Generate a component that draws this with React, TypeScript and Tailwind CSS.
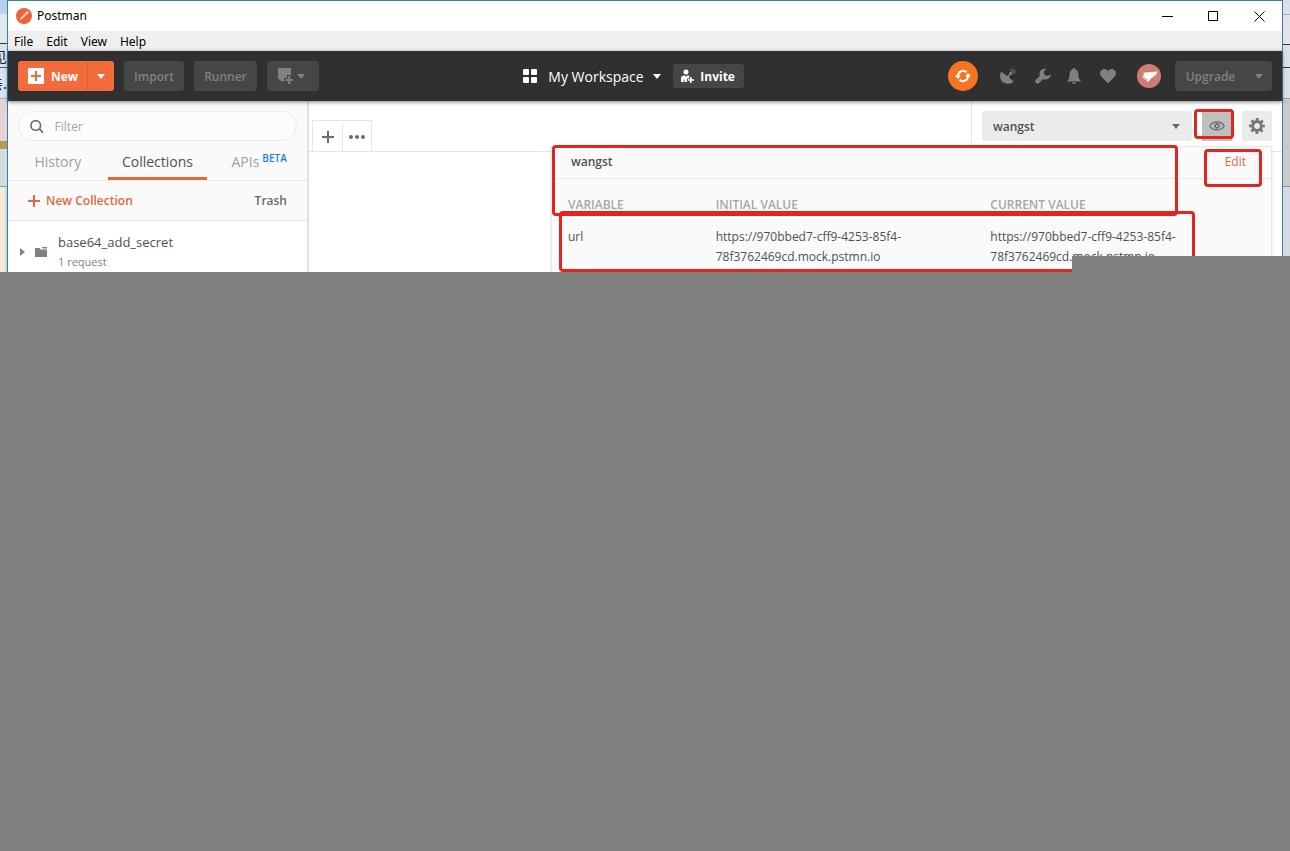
import React from 'react';
import { FaHeart } from 'react-icons/fa';

interface Variable {
  name: string;
  initial: string;
  current: string;
}

interface IconProps {
  className?: string;
}

const mockUrl = 'https://970bbed7-cff9-4253-85f4-78f3762469cd.mock.pstmn.io';

const variables: Variable[] = [{ name: 'url', initial: mockUrl, current: mockUrl }];

const menuItems = ['File', 'Edit', 'View', 'Help'];

const Caret: React.FC<IconProps> = ({ className }) => (
  <svg viewBox="0 0 8 5" className={`h-[5px] w-2 ${className ?? ''}`} fill="currentColor">
    <path d="M0 0h8L4 5z" />
  </svg>
);

const PostmanLogo = () => (
  <svg viewBox="0 0 16 16" className="h-4 w-4">
    <circle cx="8" cy="8" r="8" fill="#ee6237" />
    <path d="M4 11.8l1-2.6 4.8-4.6 1.6 1.4-4.8 4.4z" fill="#f9b79f" />
    <path d="M4 12l6.2-6.6" stroke="#fff" strokeWidth="0.7" />
    <circle cx="11.2" cy="4.4" r="1.5" fill="#fbd0c0" />
  </svg>
);

const SatelliteIcon = () => (
  <svg viewBox="0 0 16 16" className="h-4 w-4" fill="currentColor">
    <path d="M1.2 3.800C-.6 7.400-.2 11 2.200 13.600c2.800 2.800 7.800 2.800 11.600.200L8.800 9.200l1.800-2-1.200-1.200-2 1.900z" />
    <circle cx="10.700" cy="5.400" r="1.700" />
    <path d="M10 2c2.400.100 4 1.600 4.100 4.200" fill="none" stroke="currentColor" strokeWidth="1.400" opacity="0.700" />
    <path d="M11.500.500c2.500.200 4 1.800 4.200 4.300" fill="none" stroke="currentColor" opacity="0.500" />
  </svg>
);

const WrenchIcon = () => (
  <svg viewBox="0 0 16 16" className="h-4 w-4" fill="currentColor">
    <path d="M11.300 1C8 .200 4.800 2 4.500 5.400c-.100 1 .100 1.900.400 2.700L.900 11.600c-1.200 1.100-1 2.700 0 3.500 1 .900 2.600.800 3.500-.300l3.300-3.600c3.600 1.200 7.700-.400 8.300-5l-3.200 1.900-3.200-1.100-.900-3.300z" />
  </svg>
);

const BellIcon = () => (
  <svg viewBox="0 0 14 16" className="h-4 w-[14px]" fill="currentColor">
    <path d="M7 0c.9 0 1.300.600 1.400 1.300 2 .800 2.900 2.700 3 5.200.100 2.800.500 4.600 2.200 6.300v.700H.400v-.700c1.700-1.700 2.100-3.500 2.200-6.300.100-2.500 1-4.400 3-5.200C5.700.600 6.100 0 7 0z" />
    <path d="M5 14.200h4c-.200 1-1 1.600-2 1.600s-1.800-.600-2-1.600z" />
  </svg>
);

const SyncIcon = () => (
  <svg viewBox="0 0 18 18" className="h-[18px] w-[18px]" fill="none" stroke="#fff" strokeWidth="2">
    <path d="M4 9.500A5.200 5.200 0 0 1 12.600 5.200" />
    <path d="M14 8.500A5.200 5.200 0 0 1 5.400 12.800" />
    <path d="M.800 8.600h6L3.900 12z" fill="#fff" stroke="none" />
    <path d="M11.200 9.400h6L14.100 6z" fill="#fff" stroke="none" />
  </svg>
);

const TitleBar = () => (
  <div className="flex h-[30px] items-center bg-white pl-2 font-['Noto_Sans'] text-xs text-black">
    <PostmanLogo />
    <span className="ml-[5px]">Postman</span>
    <div className="ml-auto flex h-full">
      <button aria-label="Minimize" className="flex w-[46px] items-center justify-center">
        <svg viewBox="0 0 11 11" className="h-[11px] w-[11px]" stroke="#000"><path d="M0 5.500h11" /></svg>
      </button>
      <button aria-label="Maximize" className="flex w-[46px] items-center justify-center">
        <svg viewBox="0 0 11 11" className="h-[11px] w-[11px]" stroke="#000" fill="none"><path d="M.500.500h9v9h-9z" /></svg>
      </button>
      <button aria-label="Close" className="flex w-[46px] items-center justify-center">
        <svg viewBox="0 0 11 11" className="h-[11px] w-[11px]" stroke="#000"><path d="M.500.500l10 10M10.500.500l-10 10" /></svg>
      </button>
    </div>
  </div>
);

const Toolbar = () => (
  <header className="relative z-10 flex h-[50px] items-center justify-between bg-[#303030] px-[10px] text-xs font-semibold text-[#808080] shadow-[0_1px_4px_rgba(0,0,0,0.5)]">
    <div className="flex gap-[10px]">
      <div className="flex h-[30px] overflow-hidden rounded-[3px] bg-[#f26b3a] text-white">
        <button className="flex w-[70px] items-center gap-[7px] border-r border-[#e2602f] pl-[10px] font-bold">
          <svg viewBox="0 0 16 16" className="h-4 w-4">
            <rect width="16" height="16" rx="1" fill="#fff" />
            <path d="M8 3v10M3 8h10" stroke="#f26b3a" strokeWidth="2" />
          </svg>
          <span className="pt-[2px]">New</span>
        </button>
        <button aria-label="More new options" className="flex w-[26px] items-center justify-center">
          <Caret />
        </button>
      </div>
      <button className="h-[30px] w-[60px] rounded-[3px] bg-[#464646] pt-[2px]">Import</button>
      <button className="h-[30px] w-[63px] rounded-[3px] bg-[#464646] pt-[2px]">Runner</button>
      <button aria-label="New window" className="flex h-[30px] w-[52px] items-center justify-center gap-[3px] rounded-[3px] bg-[#464646] pr-1">
        <svg viewBox="0 0 17 16" className="h-4 w-[17px]" fill="currentColor">
          <path d="M1 0h13v7h-4v3H7v3.500H4.500L1 10.500z" />
          <path d="M11.200 8h2v3H16v2h-2.800v3h-2v-3H8.400v-2h2.800z" />
        </svg>
        <Caret />
      </button>
    </div>

    <div className="flex items-center text-white">
      <svg viewBox="0 0 14 14" className="h-[14px] w-[14px]" fill="#fff">
        <rect width="6" height="6" rx="1" />
        <rect x="8" width="6" height="6" rx="1" />
        <rect y="8" width="6" height="6" rx="1" />
        <rect x="8" y="8" width="6" height="6" rx="1" />
      </svg>
      <button className="ml-[11px] flex items-center gap-[9px] text-sm font-medium">
        <span className="pt-[2px]">My Workspace</span>
        <Caret />
      </button>
      <button className="ml-3 flex h-6 w-[71px] items-center justify-center gap-[6px] rounded-[3px] bg-[#464646] font-bold">
        <svg viewBox="0 0 13 14" className="h-[14px] w-[13px]" fill="#fff">
          <circle cx="5" cy="3" r="2.500" />
          <path d="M0 13V9.500C0 7.500 1.500 6.500 3 6.500h1l1 1.500 1-1.500h1c1 0 1.700.400 2 1H8v2H6V13H3.500v-2.500h-.800V13z" />
          <path d="M9 8h1.600v2.200H13v1.600h-2.400V14H9v-2.200H6.800v-1.600H9z" />
        </svg>
        <span className="pt-[2px]">Invite</span>
      </button>
    </div>

    <div className="flex items-center">
      <button aria-label="Sync" className="flex h-[30px] w-[30px] items-center justify-center rounded-full bg-[#f57421]">
        <SyncIcon />
      </button>
      <div className="ml-[22px] flex items-center">
        <button aria-label="Capture requests"><SatelliteIcon /></button>
        <button aria-label="Settings" className="ml-[19px]"><WrenchIcon /></button>
        <button aria-label="Notifications" className="ml-4"><BellIcon /></button>
        <button aria-label="Favorites" className="ml-[19px]"><FaHeart className="h-4 w-4" /></button>
      </div>
      <button aria-label="Account" className="ml-[21px] h-6 w-6 overflow-hidden rounded-full bg-[#cf7d73]">
        <svg viewBox="0 0 24 24" fill="#fff">
          <path d="M6 8.800l14.500-1.300-1.500 3.300-4.500 3.200-3.500 4-1.500-.500 1-2.700-3.500 1.200 1.800-2.200-3.800.400 2.800-2-2.800.200 2.200-1.800z" />
        </svg>
      </button>
      <div className="ml-[14px] flex h-[30px] rounded-[3px] bg-[#464646]">
        <button className="w-[71px] pt-[2px]">Upgrade</button>
        <button aria-label="Upgrade options" className="flex w-[26px] items-center justify-center"><Caret /></button>
      </div>
    </div>
  </header>
);

const Sidebar = () => (
  <aside className="w-[301px] shrink-0 border-r-2 border-[#e2e2e2] bg-[#fafafa] text-xs text-[#6b6b6b]">
    <label className="mx-[10px] mt-[10px] flex h-[30px] items-center rounded-full border border-[#ececec] bg-[#fcfcfc] pl-[11px]">
      <svg viewBox="0 0 15 15" className="h-[15px] w-[15px]" fill="none" stroke="#6b6b6b" strokeWidth="1.800">
        <circle cx="6.300" cy="6.300" r="5.300" />
        <path d="M10.200 10.200l4.200 4.200" />
      </svg>
      <input type="text" aria-label="Filter" placeholder="Filter" className="ml-[11px] w-full bg-transparent pt-[2px] outline-none placeholder:text-[#a6a6a6]" />
    </label>

    <nav className="grid h-10 grid-cols-3 border-b border-[#eaeaea] text-sm text-[#a0a0a0]">
      <button className="pt-[3px]">History</button>
      <button className="border-b-[3px] border-[#e0693e] pt-[5px] text-[#505050]">Collections</button>
      <button className="flex items-center justify-center gap-[3px] pl-1 pt-[3px]">
        APIs <span className="pb-2 text-[10px] font-semibold text-[#1a7fdc]">BETA</span>
      </button>
    </nav>

    <div className="flex h-10 items-center justify-between border-b border-[#eaeaea] px-5 font-semibold">
      <button className="flex items-center gap-[6px] text-[#e0693e]">
        <svg viewBox="0 0 12 12" className="h-3 w-3" stroke="currentColor" strokeWidth="2"><path d="M6 0v12M0 6h12" /></svg>
        New Collection
      </button>
      <button>Trash</button>
    </div>

    <div className="flex h-[51px] items-center bg-white pl-3 pt-[10px]">
      <svg viewBox="0 0 5 8" className="h-2 w-[5px]" fill="#808080"><path d="M0 0v8l5-4z" /></svg>
      <svg viewBox="0 0 12 10" className="ml-[10px] h-[10px] w-3" fill="#808080">
        <path d="M0 1h4.500l1.200 1.500H12V10H0z" />
        <path d="M7 0h5v1.500H7.500z" />
      </svg>
      <div className="ml-[11px]">
        <div className="text-[13px] leading-5 text-[#505050]">base64_add_secret</div>
        <div className="text-[11px] leading-5 text-[#808080]">1 request</div>
      </div>
    </div>
  </aside>
);

const EnvironmentBar = () => (
  <div className="flex h-[51px] items-center">
    <div className="flex h-full min-w-0 flex-1 items-end border-b border-[#e6e6e6] pl-[3px]">
      <div className="flex h-[31px] divide-x divide-[#e6e6e6] border border-b-0 border-[#e6e6e6] pt-[2px] text-[#6b6b6b]">
        <button aria-label="New tab" className="flex w-[30px] items-center justify-center">
          <svg viewBox="0 0 12 12" className="h-3 w-3" stroke="currentColor" strokeWidth="2"><path d="M6 0v12M0 6h12" /></svg>
        </button>
        <button aria-label="Tab options" className="flex w-7 items-center justify-center">
          <svg viewBox="0 0 16 4" className="h-1 w-4" fill="currentColor">
            <circle cx="2" cy="2" r="2" /><circle cx="8" cy="2" r="2" /><circle cx="14" cy="2" r="2" />
          </svg>
        </button>
      </div>
    </div>
    <div className="flex h-full items-start gap-[10px] border-b border-l border-[#e6e6e6] px-[10px] pt-[10px]">
      <div className="relative">
        <select aria-label="Environment" className="h-[30px] w-[210px] appearance-none rounded-[3px] bg-[#ebebeb] pl-[11px] pt-[2px] text-xs font-semibold text-[#505050]">
          <option>wangst</option>
        </select>
        <Caret className="pointer-events-none absolute right-3 top-[13px] text-[#6b6b6b]" />
      </div>
      <button aria-label="Environment quick look" className="flex h-[30px] w-[30px] items-center justify-center bg-[#bfbfbf]">
        <svg viewBox="0 0 16 10" className="h-[10px] w-4" fill="none" stroke="#757575">
          <path d="M.800 5C3.800-.300 12.200-.300 15.200 5c-3 5.300-11.400 5.300-14.400 0z" strokeWidth="1.500" />
          <circle cx="8" cy="5" r="2" strokeWidth="1.800" />
        </svg>
      </button>
      <button aria-label="Manage environments" className="flex h-[30px] w-[30px] items-center justify-center rounded-[3px] bg-[#ebebeb] text-[#757575]">
        <svg viewBox="0 0 16 16" className="h-4 w-4" fill="none" stroke="currentColor">
          <circle cx="8" cy="8" r="4.400" strokeWidth="3" />
          <circle cx="8" cy="8" r="6.700" strokeWidth="2.400" strokeDasharray="2.800 2.462" strokeDashoffset="1.400" />
        </svg>
      </button>
    </div>
  </div>
);

const EnvironmentPopover = () => (
  <section className="absolute right-[10px] top-[45px] w-[721px] border border-[#e6e6e6] bg-[#fafafa] pb-4 text-xs text-[#505050] shadow-sm">
    <div className="flex h-8 items-center justify-between border-b border-[#eaeaea] pb-[2px] pl-[19px] pr-[25px]">
      <h2 className="font-semibold">wangst</h2>
      <a href="#edit" className="text-[#e0693e]">Edit</a>
    </div>
    <table className="mx-4 mt-4 table-fixed text-left leading-5">
      <thead>
        <tr className="text-[#a6a6a6]">
          <th className="w-[148px] font-semibold">VARIABLE</th>
          <th className="w-[275px] font-semibold">INITIAL VALUE</th>
          <th className="w-[265px] font-semibold">CURRENT VALUE</th>
        </tr>
      </thead>
      <tbody>
        {variables.map(variable => (
          <tr key={variable.name} className="align-top">
            <td className="pt-3">{variable.name}</td>
            <td className="pt-3">{variable.initial}</td>
            <td className="pt-3">{variable.current}</td>
          </tr>
        ))}
      </tbody>
    </table>
  </section>
);

// Highlight frames that lie over the environment area
const Highlights = () => (
  <div className="pointer-events-none">
    <div className="absolute right-[104px] top-[44px] h-[71px] w-[626px] rounded border-[3px] border-[#e0261e]" />
    <div className="absolute right-[87px] top-[110px] h-[61px] w-[636px] rounded border-[3px] border-[#e0261e]" />
    <div className="absolute right-[48px] top-2 h-[30px] w-10 rounded border-[3px] border-[#e0261e]" />
    <div className="absolute right-5 top-[48px] h-[38px] w-[58px] rounded border-[3px] border-[#e0261e]" />
  </div>
);

const LeftEdge = () => (
  <div className="flex w-[7px] shrink-0 flex-col overflow-hidden bg-[#d5e6f2] font-['Noto_Sans_CJK_SC',sans-serif] text-sm text-[#222]">
    <div className="h-[14px] bg-[#b5d3e8]" />
    <div className="h-[30px] border-b border-[#333] bg-[#dfe8ee]" />
    <div className="flex h-6 items-center justify-end border-b border-[#555]">见</div>
    <div className="flex h-[31px] items-center justify-end border-b border-[#a9b8c0]">亲.</div>
    <div className="h-[42px] bg-[#e3d3d6]" />
    <div className="h-2 bg-[#b89b52]" />
    <div className="h-[38px] border-b border-[#8b9ba5] bg-[#cfdde0]" />
    <div className="flex-1 border-r-2 border-[#b9dbee] bg-[#fbe9d6]" />
  </div>
);

const RightEdge = () => (
  <div className="flex w-[7px] shrink-0 flex-col bg-[#dbe2e9]">
    <div className="h-[15px] border-b border-[#a8adb8] bg-[#d8dfef]" />
    <div className="h-[30px] border-b border-[#333] bg-[#e1e4ea]" />
    <div className="h-[23px] border-b border-[#333]" />
    <div className="h-[31px] border-b border-[#9aa0a5]" />
    <div className="h-[88px] border-b border-[#8b9299] bg-[#c8cbc9]" />
    <div className="flex-1 bg-[#d2dae2]" />
  </div>
);

const App: React.FC = () => {
  return (
    <div className="min-h-screen bg-[#808080] font-['Open_Sans',sans-serif]">
      <div className="relative flex">
        <LeftEdge />
        <main className="min-w-0 flex-1 border-x border-t border-[#3f7da6]">
          <TitleBar />
          <nav className="flex h-5 items-center gap-[13px] bg-[#efefef] pl-[6px] pt-[2px] font-['Noto_Sans'] text-xs text-black">
            {menuItems.map(item => (
              <button key={item}>{item}</button>
            ))}
          </nav>
          <Toolbar />
          <div className="relative flex overflow-hidden bg-white">
            <Sidebar />
            <div className="min-w-0 flex-1">
              <EnvironmentBar />
            </div>
            <EnvironmentPopover />
            <Highlights />
          </div>
        </main>
        <RightEdge />
        <div className="absolute bottom-0 right-0 z-20 h-4 w-[218px] bg-[#808080]" />
      </div>
    </div>
  );
};

export default App;
